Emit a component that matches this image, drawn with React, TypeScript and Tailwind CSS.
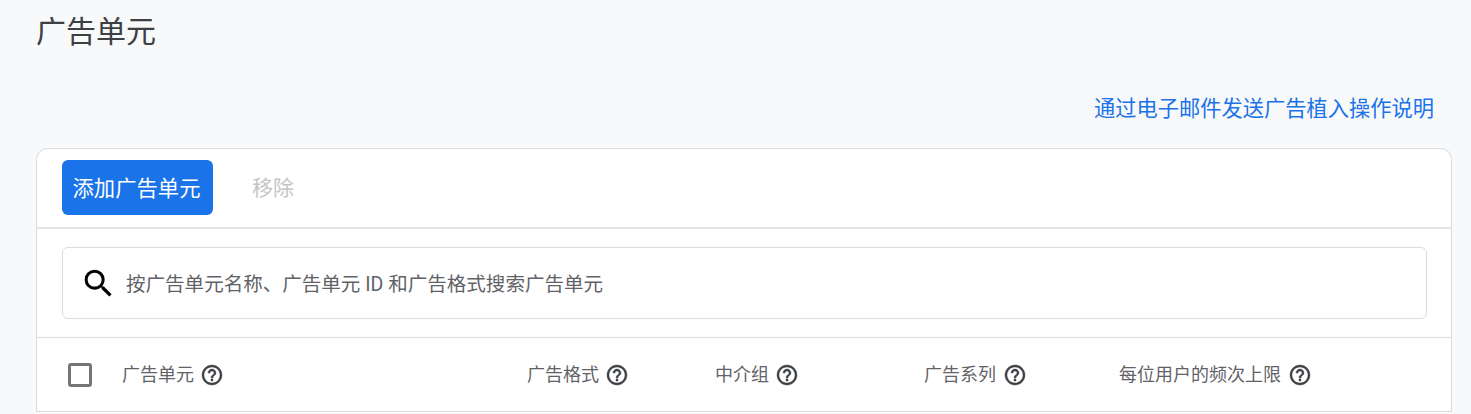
const font = "font-['Roboto','Noto_Sans_CJK_SC',sans-serif]";

function HelpIcon({ className }: { className: string }) {
  return (
    <svg width="24" height="24" viewBox="0 0 24 24" fill="#3c4043" stroke="#3c4043" strokeWidth="0.4" className={`shrink-0 ${className}`}>
      <path d="M11 18h2v-2h-2v2zm1-16C6.48 2 2 6.48 2 12s4.48 10 10 10 10-4.48 10-10S17.52 2 12 2zm0 18c-4.41 0-8-3.59-8-8s3.59-8 8-8 8 3.59 8 8-3.59 8-8 8zm0-14c-2.21 0-4 1.79-4 4h2c0-1.1.9-2 2-2s2 .9 2 2c0 2-3 1.75-3 5h2c0-2.25 3-2.5 3-5 0-2.21-1.79-4-4-4z" />
    </svg>
  );
}

function HeaderCell({ label, className, iconGap = "ml-[6px]" }: { label: string; className: string; iconGap?: string }) {
  return (
    <div className={`flex items-center text-[18px] text-[#5f6368] ${className}`}>
      <span>{label}</span>
      <HelpIcon className={iconGap} />
    </div>
  );
}

export default function App() {
  return (
    <div className={`${font} h-[414px] overflow-hidden bg-[#f8f9fa] pl-9 pr-[19px]`}>
      <h1 className="h-[64px] text-[30px] leading-[64px] font-normal text-[#3c4043]">广告单元</h1>

      <div className="flex h-[84px] justify-end pr-[18px] pt-[30px]">
        <a className="text-[21.25px] leading-[30px] text-[#1a73e8]">通过电子邮件发送广告植入操作说明</a>
      </div>

      <div className="rounded-t-xl border border-b-0 border-[#dadce0] bg-white">
        <div className="flex h-[80px] items-start border-b-2 border-[#e3e4e6] pl-[25px] pt-[11px]">
          <button className="h-[55px] w-[151px] rounded-md bg-[#1a73e8] pr-[2px] pt-[2px] text-[21.33px] text-white">添加广告单元</button>
          <button className="ml-[39px] h-[55px] pt-[2px] text-[21px] text-[#c5c5c5]">移除</button>
        </div>

        <div className="border-b border-[#dadce0] py-[18px] pl-[25px] pr-[24px]">
          <div className="flex h-[72px] items-center rounded-md border border-[#dadce0] pl-[17px]">
            <svg width="37" height="37" viewBox="0 0 24 24" fill="#000" className="shrink-0">
              <path d="M15.5 14h-.79l-.28-.27A6.47 6.47 0 0 0 16 9.5 6.5 6.5 0 1 0 9.5 16c1.61 0 3.09-.59 4.23-1.57l.27.28v.79l5 4.99L20.49 19l-4.99-5zm-6 0C7.01 14 5 11.99 5 9.5S7.01 5 9.5 5 14 7.01 14 9.5 11.99 14 9.5 14z" />
            </svg>
            <span className="ml-[9px] pt-[4px] text-[19.55px] text-[#5f6368]">按广告单元名称、广告单元 ID 和广告格式搜索广告单元</span>
          </div>
        </div>

        <div className="flex h-[74px] items-center border-b border-[#dadce0] pl-[31px]">
          <div className="h-6 w-6 shrink-0 rounded-[3px] border-[3px] border-[#757575]" />
          <HeaderCell label="广告单元" className="ml-[30px] w-[405px]" />
          <HeaderCell label="广告格式" className="w-[188px]" />
          <HeaderCell label="中介组" className="w-[209px]" />
          <HeaderCell label="广告系列" className="w-[195px]" iconGap="ml-[7px]" />
          <HeaderCell label="每位用户的频次上限" className="" iconGap="ml-[7px]" />
        </div>
      </div>
    </div>
  );
}
